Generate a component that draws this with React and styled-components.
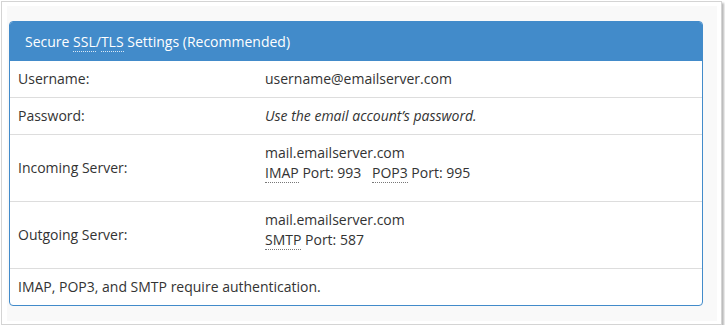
import React from 'react';
import styled, { createGlobalStyle } from 'styled-components';

const GlobalStyle = createGlobalStyle`
  html, body {
    margin: 0;
    padding: 0;
    background: #ffffff;
  }
  body {
    font-family: "Open Sans", "Liberation Sans", sans-serif;
    font-size: 14px;
    line-height: 20px;
    color: #333333;
  }
`;

const Frame = styled.div`
  margin: 1px 0 0 1px;
  width: 721px;
  box-sizing: border-box;
  border: 1px solid #d4d4d4;
  box-shadow: 2px 2px 2px rgba(0, 0, 0, 0.28);
  background: #ffffff;
  padding: 4px 4px 3px 5px;
`;

const Page = styled.div`
  background: #f9f9f9;
  padding: 15px 14px 15px 2px;
`;

const Panel = styled.div`
  background: #ffffff;
  border: 1px solid #428bca;
  border-radius: 4px;
  overflow: hidden;
`;

const PanelHeading = styled.div`
  background: #428bca;
  color: #ffffff;
  padding: 10px 15px 9px;
  line-height: 20px;
`;

const Abbr = styled.abbr`
  text-decoration: none;
  border-bottom: 1px dotted ${(p) => (p.$light ? 'rgba(255,255,255,0.8)' : '#777777')};
  cursor: help;
`;

const Table = styled.table`
  width: 100%;
  border-collapse: collapse;
`;

const Row = styled.tr`
  & + & > td {
    border-top: 1px solid #dddddd;
  }
`;

const Label = styled.td`
  width: 231px;
  padding: 8px;
  vertical-align: middle;
`;

const Value = styled.td`
  padding: ${(p) => (p.$multi ? '8px 8px 18px' : '8px')};
  vertical-align: middle;
  font-style: ${(p) => (p.$italic ? 'italic' : 'normal')};
`;

const Note = styled.td`
  padding: 8px;
`;

const Port = styled.span`
  margin-right: ${(p) => (p.$gap ? '7px' : '0')};
`;

const App = () => {
  return (
    <>
      <GlobalStyle />
      <Frame>
        <Page>
          <Panel>
            <PanelHeading>
              Secure <Abbr $light title="Secure Sockets Layer">SSL</Abbr>/
              <Abbr $light title="Transport Layer Security">TLS</Abbr> Settings (Recommended)
            </PanelHeading>
            <Table>
              <tbody>
                <Row>
                  <Label>Username:</Label>
                  <Value>username@emailserver.com</Value>
                </Row>
                <Row>
                  <Label>Password:</Label>
                  <Value $italic>Use the email account’s password.</Value>
                </Row>
                <Row>
                  <Label>Incoming Server:</Label>
                  <Value $multi>
                    mail.emailserver.com
                    <br />
                    <Port $gap>
                      <Abbr title="Internet Message Access Protocol">IMAP</Abbr> Port: 993
                    </Port>{' '}
                    <Port>
                      <Abbr title="Post Office Protocol 3">POP3</Abbr> Port: 995
                    </Port>
                  </Value>
                </Row>
                <Row>
                  <Label>Outgoing Server:</Label>
                  <Value $multi>
                    mail.emailserver.com
                    <br />
                    <Abbr title="Simple Mail Transfer Protocol">SMTP</Abbr> Port: 587
                  </Value>
                </Row>
                <Row>
                  <Note colSpan={2}>IMAP, POP3, and SMTP require authentication.</Note>
                </Row>
              </tbody>
            </Table>
          </Panel>
        </Page>
      </Frame>
    </>
  );
};

export default App;
